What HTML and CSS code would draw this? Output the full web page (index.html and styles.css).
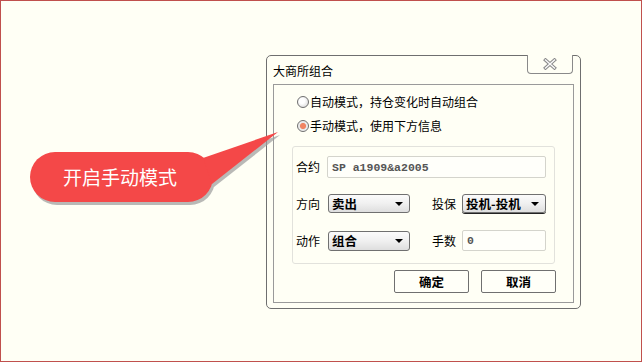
FILE: index.html
```html
<!DOCTYPE html>
<html>
<head>
<meta charset="utf-8">
<link rel="stylesheet" href="styles.css">
</head>
<body>
<div class="screen">
  <div class="dialog">
    <div class="titlebar">
      <span class="title">大商所组合</span>
      <div class="close">
        <svg width="16" height="12" viewBox="0 0 16 12"><path d="M3.5 2 L12.5 10 M12.5 2 L3.5 10" stroke="#8a8a8a" stroke-width="3.4" stroke-linecap="square"/><path d="M3.5 2 L12.5 10 M12.5 2 L3.5 10" stroke="#fbfbfb" stroke-width="1.4" stroke-linecap="square"/></svg>
      </div>
    </div>
    <div class="panel">
      <label class="radio"><span class="dot"></span>自动模式，持仓变化时自动组合</label>
      <label class="radio"><span class="dot on"></span>手动模式，使用下方信息</label>
      <div class="group">
        <div class="row r1">
          <span class="lbl">合约</span>
          <div class="input wide mono">SP a1909&amp;a2005</div>
        </div>
        <div class="row r2">
          <span class="lbl">方向</span>
          <div class="select s1">卖出<span class="arrow"></span></div>
          <span class="lbl lbl2">投保</span>
          <div class="select s2 focus">投机-投机<span class="arrow"></span></div>
        </div>
        <div class="row r3">
          <span class="lbl">动作</span>
          <div class="select s1">组合<span class="arrow"></span></div>
          <span class="lbl lbl2">手数</span>
          <div class="input small">0</div>
        </div>
      </div>
      <div class="buttons">
        <div class="btn">确定</div>
        <div class="btn">取消</div>
      </div>
    </div>
  </div>
  <div class="callout">
    <svg width="270" height="95" viewBox="0 0 270 95">
      <g transform="translate(2,3)" fill="#9c9c9c" opacity="0.7">
        <rect x="10" y="32" width="183" height="50" rx="25"/>
        <polygon points="183,38 258,12 192,64"/>
      </g>
      <g fill="#f44848">
        <rect x="10" y="32" width="183" height="50" rx="25"/>
        <polygon points="183,38 258,12 192,64"/>
      </g>
    </svg>
    <span class="callout-text">开启手动模式</span>
  </div>
</div>
</body>
</html>
```

FILE: styles.css
```css
html, body { margin: 0; padding: 0; }
body { font-family: "Noto Sans CJK SC", "Liberation Sans", sans-serif; font-size: 12px; color: #000; }
.screen {
  width: 640px; height: 360px;
  border: 1px solid #c0504d;
  background: #fffff5;
  position: relative;
  overflow: hidden;
}
.dialog {
  position: absolute; left: 265px; top: 54px;
  width: 313px; height: 252px;
  border: 1px solid #6f6f6f;
  border-radius: 5px;
  background: #fffff5;
  display: flex; flex-direction: column;
}
.titlebar {
  height: 28px; display: flex; align-items: flex-start; position: relative;
}
.title { margin: 7px 0 0 6px; line-height: 16px; }
.close {
  position: absolute; left: 260px; top: -1px;
  width: 44px; height: 18px;
  border: 1px solid #8a8a8a; border-top: none;
  border-radius: 0 0 4px 4px;
  background: #fffff5;
  display: flex; align-items: center; justify-content: center;
}
.panel {
  margin: 0 6px 5px 6px;
  flex: 1;
  border: 1px solid #9a9a9a;
  display: flex; flex-direction: column;
  padding: 9px 0 0 23px;
}
.radio { display: flex; align-items: center; height: 16px; line-height: 16px; margin-bottom: 8px; }
.dot {
  width: 12px; height: 12px; box-sizing: border-box;
  border: 1px solid #6f6f6f; border-radius: 50%;
  background: radial-gradient(circle at 40% 40%, #ffffff 30%, #d0d0d0 100%);
  margin-right: 1px;
}
.dot.on { background: radial-gradient(circle at 50% 50%, #f08462 0 38%, #e6e6e6 48%, #ffffff 100%); }
.group {
  margin: 4px 0 0 -5px;
  width: 261px; height: 116px;
  border: 1px solid #e2e2dc;
  border-radius: 3px;
  position: relative;
}
.row { display: flex; align-items: center; padding-left: 3px; }
.r1 { margin-top: 9px; }
.r2 { margin-top: 16px; }
.r3 { margin-top: 17px; }
.lbl { width: 31px; line-height: 16px; }
.lbl2 { margin-left: 22px; width: 30px; }
.input {
  box-sizing: border-box; height: 22px;
  border: 1px solid #d4d4cc; border-radius: 2px;
  background: #fffffa;
  display: flex; align-items: center; padding-left: 4px;
  color: #555;
}
.wide { width: 219px; }
.small { width: 84px; height: 21px; font-family: "Liberation Mono", monospace; font-weight: bold; font-size: 11.5px; }
.mono { font-family: "Liberation Mono", monospace; font-weight: bold; font-size: 11.5px; letter-spacing: 0; }
.select {
  box-sizing: border-box; height: 19px;
  border: 1px solid #707070; border-radius: 3px;
  background: linear-gradient(#fbfbfb, #f0f0f0 50%, #dedede);
  font-weight: bold; font-size: 12.5px;
  display: flex; align-items: center; padding-left: 3px;
  position: relative; line-height: 16px;
}
.s1 { width: 82px; margin-left: 1px; }
.s2 { width: 84px; }
.r3 .s1 { height: 20px; }
.focus { box-shadow: 0 1px 0 #222; }
.arrow {
  margin-left: auto; margin-right: 6px;
  width: 0; height: 0;
  border-left: 4px solid transparent; border-right: 4px solid transparent;
  border-top: 4px solid #000;
}
.buttons { display: flex; gap: 12px; margin: 6px 0 0 97px; }
.btn {
  box-sizing: border-box; width: 75px; height: 23px;
  border: 1px solid #707070; border-radius: 2px;
  background: #fffff8;
  display: flex; align-items: center; justify-content: center;
  font-weight: bold; font-size: 12.5px;
}
.callout { position: absolute; left: 19px; top: 119px; width: 270px; height: 95px; }
.callout svg { display: block; }
.callout-text {
  position: absolute; left: 43px; top: 45px;
  color: #fff; font-size: 19px; line-height: 24px; white-space: nowrap;
}
```
